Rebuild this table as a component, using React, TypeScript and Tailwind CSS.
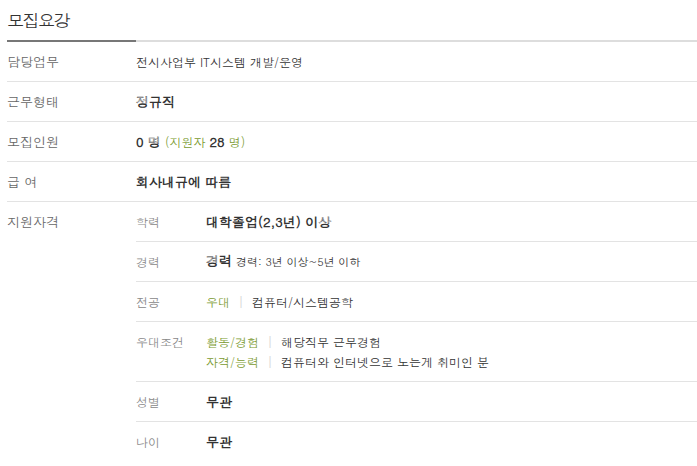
const FONT = "font-['Dotum','Noto_Sans_CJK_KR',sans-serif]";

function Row({ label, children }: { label: string; children: React.ReactNode }) {
  return (
    <div className="flex h-[40px] items-center border-b border-[#e3e3e3]">
      <div className="w-[129px] shrink-0 text-[13px] text-[#666]">{label}</div>
      <div className="text-[#333]">{children}</div>
    </div>
  );
}

function SubRow({
  label,
  children,
  last,
  tall,
}: {
  label: string;
  children: React.ReactNode;
  last?: boolean;
  tall?: boolean;
}) {
  return (
    <div
      className={`flex ${tall ? 'h-[60px] pt-[10px]' : 'h-[40px] items-center'} ${
        last ? '' : 'border-b border-[#e3e3e3]'
      }`}
    >
      <div className="w-[70px] shrink-0 text-[#888]">{label}</div>
      <div className="text-[#333]">{children}</div>
    </div>
  );
}

function Sep() {
  return <span className="mx-[8px] text-[#d0d0d0]">|</span>;
}

function B({ children }: { children: React.ReactNode }) {
  return <b className="text-[13px] font-bold text-[#333]">{children}</b>;
}

export default function App() {
  return (
    <div className={`${FONT} h-[466px] w-[697px] bg-white pl-[7px] text-[12px] leading-[20px]`}>
      {/* 제목 */}
      <div className="flex h-[40px] items-center">
        <h2 className="text-[17px] font-normal tracking-[-1.5px] text-[#333]">모집요강</h2>
      </div>
      <div className="flex h-[2px]">
        <div className="w-[129px] bg-[#777]" />
        <div className="flex-1 bg-[#ddd]" />
      </div>

      <Row label="담당업무">전시사업부 IT시스템 개발/운영</Row>
      <Row label="근무형태">
        <B>정규직</B>
      </Row>
      <Row label="모집인원">
        <B>0 명</B>{' '}
        <span className="text-[#7a9a2f]">
          (지원자 <B>28</B> 명)
        </span>
      </Row>
      <Row label="급 여">
        <B>회사내규에 따름</B>
      </Row>

      {/* 지원자격 */}
      <div className="flex">
        <div className="w-[129px] shrink-0 pt-[10px] text-[13px] text-[#666]">지원자격</div>
        <div className="flex-1">
          <SubRow label="학력">
            <B>대학졸업(2,3년) 이상</B>
          </SubRow>
          <SubRow label="경력">
            <B>경력</B> <span className="text-[11px]">경력: 3년 이상~5년 이하</span>
          </SubRow>
          <SubRow label="전공">
            <span className="text-[#7a9a2f]">우대</span>
            <Sep />
            컴퓨터/시스템공학
          </SubRow>
          <SubRow label="우대조건" tall>
            <div>
              <span className="text-[#7a9a2f]">활동/경험</span>
              <Sep />
              해당직무 근무경험
            </div>
            <div>
              <span className="text-[#7a9a2f]">자격/능력</span>
              <Sep />
              컴퓨터와 인터넷으로 노는게 취미인 분
            </div>
          </SubRow>
          <SubRow label="성별">
            <B>무관</B>
          </SubRow>
          <SubRow label="나이" last>
            <B>무관</B>
          </SubRow>
        </div>
      </div>
    </div>
  );
}
